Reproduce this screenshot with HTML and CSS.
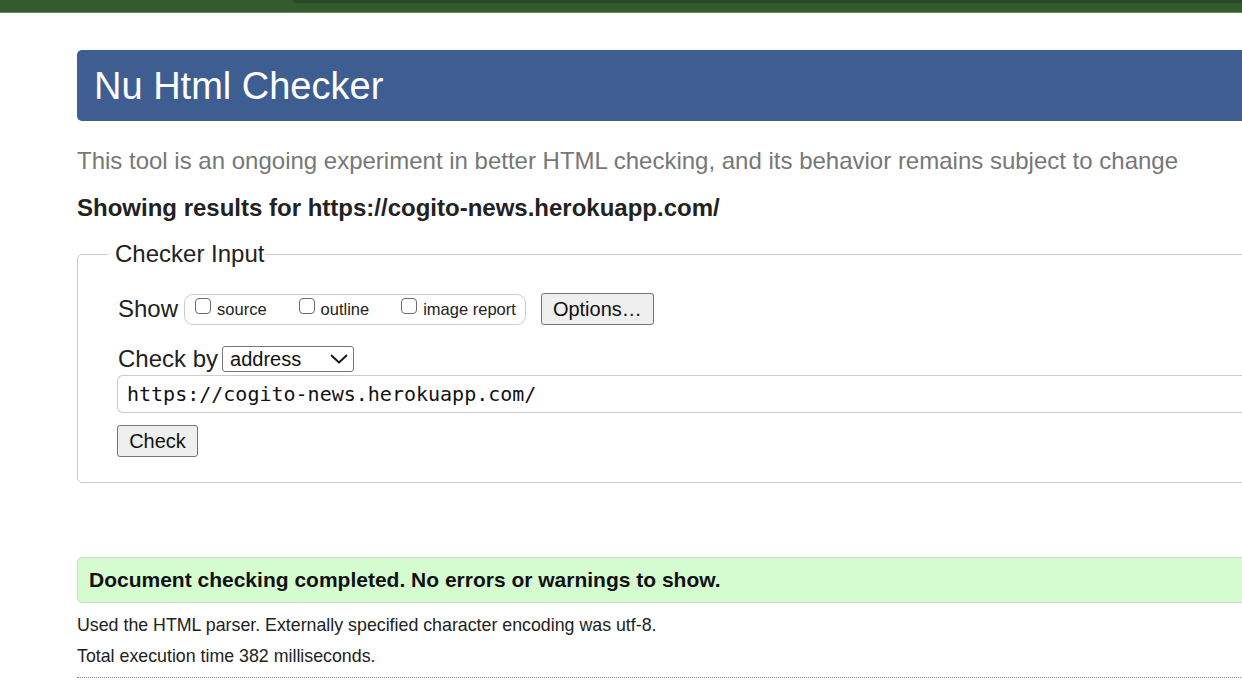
FILE: index.html
```html
<!DOCTYPE html>
<html lang="en">
<head>
<meta charset="utf-8">
<title>Nu Html Checker</title>
<link rel="stylesheet" href="styles.css">
</head>
<body>
<div class="topbar"><div class="topbar-tab"></div></div>
<main class="page">
  <h1 class="banner">Nu Html Checker</h1>
  <p class="tagline">This tool is an ongoing experiment in better HTML checking, and its behavior remains subject to change</p>
  <h2 class="results-title">Showing results for https://cogito-news.herokuapp.com/</h2>
  <form class="checker-form">
    <fieldset class="checker-input">
      <legend class="checker-legend">Checker Input</legend>
      <div class="row show-row">
        <span class="row-label">Show</span>
        <span class="show-group">
          <label class="opt"><span class="cb"></span>source</label>
          <label class="opt"><span class="cb"></span>outline</label>
          <label class="opt"><span class="cb"></span>image report</label>
        </span>
        <span class="btn options-btn">Options…</span>
      </div>
      <div class="row checkby-row">
        <span class="row-label">Check by</span>
        <span class="select">address
          <svg class="chev" width="18" height="12" viewBox="0 0 18 12"><path d="M1.5 2.5 L9 9.5 L16.5 2.5" fill="none" stroke="#111" stroke-width="1.8" stroke-linecap="round" stroke-linejoin="round"/></svg>
        </span>
      </div>
      <div class="url-input">https://cogito-news.herokuapp.com/</div>
      <span class="btn check-btn">Check</span>
    </fieldset>
  </form>
  <div class="success">Document checking completed. No errors or warnings to show.</div>
  <p class="details">Used the HTML parser. Externally specified character encoding was utf-8.</p>
  <p class="details">Total execution time 382 milliseconds.</p>
  <hr class="dotted">
</main>
</body>
</html>
```
FILE: styles.css
```css
html, body {
  margin: 0;
  padding: 0;
  background: #fff;
  overflow: hidden;
}
body {
  font-family: "Liberation Sans", Arial, Helvetica, sans-serif;
  color: #222;
  width: 1242px;
  height: 698px;
}
.topbar {
  height: 12px;
  background: #355a30;
  border-bottom: 1px solid #6b8a63;
  position: relative;
}
.topbar-tab {
  position: absolute;
  left: 293px;
  right: 0;
  top: 0;
  height: 3px;
  background: #2c482b;
  border-bottom-left-radius: 4px;
}
.page {
  margin-left: 77px;
  width: 1300px;
}
.banner {
  margin: 37px 0 0 0;
  height: 71px;
  box-sizing: border-box;
  background: #3e5e92;
  color: #fff;
  font-weight: normal;
  font-size: 38px;
  line-height: 73px;
  padding-left: 17px;
  border-radius: 5px 0 0 5px;
}
.tagline {
  margin: 26px 0 0 0;
  color: #777;
  font-size: 24px;
  line-height: 28px;
}
.results-title {
  margin: 19px 0 0 0;
  font-size: 24px;
  line-height: 28px;
  font-weight: bold;
  color: #222;
}
.checker-form {
  margin: 18px 0 0 0;
}
.checker-input {
  margin: 0;
  border: 1px solid #ccc;
  border-radius: 5px;
  padding: 8px 0 25px 40px;
  box-sizing: border-box;
}
.checker-legend {
  font-size: 24px;
  padding: 0 1px 0 7px;
  margin-left: -10px;
  color: #222;
  line-height: 28px;
}
.row {
  display: flex;
  align-items: center;
}
.row-label {
  font-size: 24px;
  line-height: 26px;
  color: #222;
}
.show-row {
  margin-top: 17px;
  height: 32px;
}
.show-group {
  display: flex;
  align-items: center;
  margin-left: 6px;
  height: 31px;
  box-sizing: border-box;
  border: 1px solid #ccc;
  border-radius: 9px;
  padding: 0 9px 0 10px;
}
.opt {
  display: flex;
  align-items: center;
  font-size: 16.5px;
  color: #222;
  margin-right: 32px;
}
.opt:last-child {
  margin-right: 0;
}
.cb {
  width: 16px;
  height: 16px;
  box-sizing: border-box;
  border: 1px solid #6b6b6b;
  border-radius: 4px;
  margin-right: 6px;
  position: relative;
  top: -3px;
  background: #fff;
}
.btn {
  display: inline-flex;
  align-items: center;
  justify-content: center;
  box-sizing: border-box;
  background: #efefef;
  border: 1px solid #767676;
  border-radius: 3px;
  font-size: 20px;
  color: #111;
}
.options-btn {
  margin-left: 15px;
  width: 113px;
  height: 32px;
}
.checkby-row {
  margin-top: 21px;
  height: 26px;
}
.select {
  display: inline-flex;
  align-items: center;
  justify-content: space-between;
  margin-left: 4px;
  width: 132px;
  height: 26px;
  box-sizing: border-box;
  border: 1px solid #767676;
  border-radius: 3px;
  padding: 0 5px 0 7px;
  font-size: 20px;
  color: #111;
}
.chev {
  display: block;
}
.url-input {
  margin-top: 3px;
  margin-left: -1px;
  height: 38px;
  box-sizing: border-box;
  border: 1px solid #ccc;
  border-right: none;
  border-radius: 6px 0 0 6px;
  font-family: "DejaVu Sans Mono", "Liberation Mono", monospace;
  font-size: 20px;
  line-height: 36px;
  padding-left: 9px;
  color: #111;
}
.check-btn {
  margin-top: 12px;
  margin-left: -1px;
  width: 81px;
  height: 32px;
}
.success {
  margin-top: 74px;
  height: 46px;
  box-sizing: border-box;
  background: #d5fcd0;
  border: 1px solid #c8dcc6;
  border-radius: 5px 0 0 5px;
  font-size: 21px;
  font-weight: bold;
  color: #111;
  line-height: 44px;
  padding-left: 11px;
}
.details {
  margin: 0;
  font-size: 17.8px;
  line-height: 31px;
  color: #222;
}
.success + .details {
  margin-top: 7px;
}
.dotted {
  margin: 5px 0 0 0;
  border: none;
  border-top: 1px dotted #888;
  height: 0;
}
```
